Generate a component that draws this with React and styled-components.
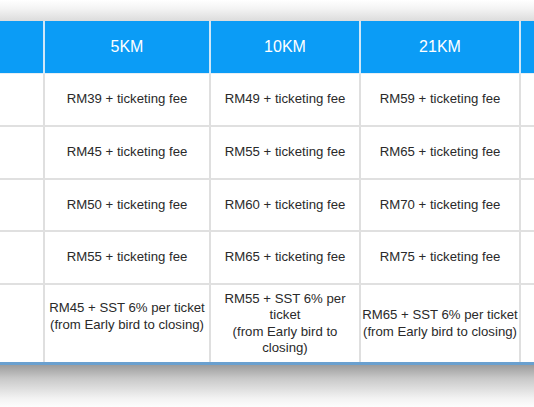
import React from 'react';
import styled, { createGlobalStyle } from 'styled-components';

const GlobalStyle = createGlobalStyle`
  html, body {
    margin: 0;
    padding: 0;
    background: #ffffff;
  }
  body {
    font-family: "Liberation Sans", Arial, sans-serif;
  }
`;

const Page = styled.div`
  width: 534px;
  height: 407px;
  overflow: hidden;
  display: flex;
  flex-direction: column;
  background: #ffffff;
`;

const TopShade = styled.div`
  height: 21px;
  flex: none;
  background: linear-gradient(to bottom, #ffffff 0%, #f4f4f4 40%, #dcdcdc 100%);
`;

const BottomShade = styled.div`
  flex: none;
  height: 44px;
  border-top: 3px solid #6aa0cf;
  background: linear-gradient(to bottom, #9c9c9c 0%, #c8c8c8 30%, #f2f2f2 75%, #ffffff 100%);
`;

const PriceTable = styled.table`
  flex: none;
  width: 621px;
  table-layout: fixed;
  border-collapse: separate;
  border-spacing: 0;
`;

const HeadCell = styled.th`
  box-sizing: border-box;
  width: ${(p) => p.$w}px;
  height: 53px;
  padding: 0 2px;
  background: #0b9cf6;
  color: #ffffff;
  font-size: 16px;
  font-weight: normal;
  text-align: center;
  vertical-align: middle;
  border-right: 2px solid #cfe7f8;
  border-bottom: 1px solid #e6eef4;
`;

const Cell = styled.td`
  box-sizing: border-box;
  height: ${(p) => p.$h}px;
  padding: 0 0 ${(p) => p.$lift || 0}px;
  background: #ffffff;
  color: #2a2a2a;
  font-size: 13.2px;
  line-height: 16.3px;
  text-align: center;
  vertical-align: middle;
  border-right: 2px solid #dfdfdf;
  border-bottom: 2px solid #e0e0e0;
`;

const LastRowCell = styled(Cell)`
  border-bottom: none;
`;

const columns = [
  { label: '', w: 45 },
  { label: '5KM', w: 166 },
  { label: '10KM', w: 150 },
  { label: '21KM', w: 160 },
  { label: '', w: 100 },
];

const rows = [
  ['RM39', 'RM49', 'RM59'],
  ['RM45', 'RM55', 'RM65'],
  ['RM50', 'RM60', 'RM70'],
  ['RM55', 'RM65', 'RM75'],
];

const rowHeights = [53, 53, 52, 53];
const sstPrices = ['RM45', 'RM55', 'RM65'];

export default function App() {
  return (
    <>
      <GlobalStyle />
      <Page>
        <TopShade />
        <PriceTable>
          <thead>
            <tr>
              {columns.map((c, i) => (
                <HeadCell key={i} $w={c.w}>
                  {c.label}
                </HeadCell>
              ))}
            </tr>
          </thead>
          <tbody>
            {rows.map((r, i) => (
              <tr key={i}>
                <Cell $h={rowHeights[i]} />
                {r.map((price, j) => (
                  <Cell key={j} $h={rowHeights[i]}>
                    {price} + ticketing fee
                  </Cell>
                ))}
                <Cell $h={rowHeights[i]} />
              </tr>
            ))}
            <tr>
              <LastRowCell $h={77} />
              {sstPrices.map((price, j) => (
                <LastRowCell key={j} $h={77} $lift={j === 0 ? 14 : 0}>
                  {price} + SST 6% per ticket
                  <br />
                  (from Early bird to closing)
                </LastRowCell>
              ))}
              <LastRowCell $h={77} />
            </tr>
          </tbody>
        </PriceTable>
        <BottomShade />
      </Page>
    </>
  );
}
